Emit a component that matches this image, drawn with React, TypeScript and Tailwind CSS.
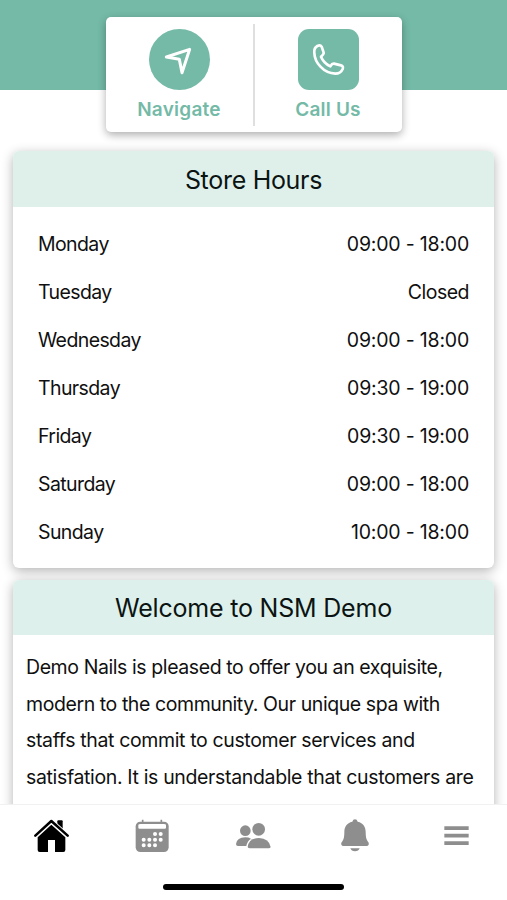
import type { ReactNode } from 'react';

interface DayHours {
  day: string;
  hours: string;
}

const storeHours: DayHours[] = [
  { day: 'Monday', hours: '09:00 - 18:00' },
  { day: 'Tuesday', hours: 'Closed' },
  { day: 'Wednesday', hours: '09:00 - 18:00' },
  { day: 'Thursday', hours: '09:30 - 19:00' },
  { day: 'Friday', hours: '09:30 - 19:00' },
  { day: 'Saturday', hours: '09:00 - 18:00' },
  { day: 'Sunday', hours: '10:00 - 18:00' },
];

const welcomeLines = [
  { text: 'Demo Nails is pleased to offer you an exquisite,', className: 'tracking-[-0.41px]' },
  { text: 'modern to the community. Our unique spa with', className: 'tracking-[-0.42px]' },
  { text: 'staffs that commit to customer services and', className: 'tracking-[-0.36px]' },
  { text: 'satisfation. It is understandable that customers are', className: 'tracking-[-0.35px]' },
];

function NavigateIcon() {
  return (
    <svg className="w-[61px] h-[61px]" viewBox="177 88 183 183" fill="none" stroke="#fff" strokeWidth="9" strokeLinejoin="round">
      <path d="M299 149 L229 172 L268 179 L276 219 Z" />
    </svg>
  );
}

function PhoneIcon() {
  return (
    <svg className="w-[61px] h-[61px]" viewBox="624 88 183 183" fill="none" stroke="#fff" strokeWidth="8" strokeLinejoin="round">
      <path d="M682 139 Q691 135 695 141 L701 159 Q702 163 693 171 C699 186 707 193 721 200 Q726 191 732 192 L753 197 Q761 199 758 208 Q752 222 736 222 C700 221 674 188 673 160 Q671 145 682 139 Z" />
    </svg>
  );
}

function HomeIcon() {
  return (
    <svg className="w-[35px] h-[35px]" viewBox="42 56 105 105">
      <path d="M112 63 Q112 60 115 60 H125 Q128 60 128 63 V94 L112 79 Z" />
      <path d="M46 106 L94 62 L143 106" fill="none" stroke="#fff" strokeWidth="13" />
      <path d="M46 106 L94 62 L143 106" fill="none" stroke="#000" strokeWidth="7.5" strokeLinecap="round" strokeLinejoin="round" />
      <path d="M94 73 L136 111 V149 Q136 155 130 155 H105 V119 H84 V155 H59 Q53 155 53 149 V111 Z" />
    </svg>
  );
}

function CalendarIcon() {
  return (
    <svg className="w-[35px] h-[35px]" viewBox="346 56 105 105">
      <rect x="348" y="64" width="99" height="91" rx="14" fill="#8e8e8e" />
      <path d="M369 58 v9 M425 58 v9" stroke="#8e8e8e" strokeWidth="5" />
      <path d="M356 74 Q356 71 363 71 H432 Q439 71 439 74 V82 Q439 85 435 85 H360 Q356 85 356 82 Z" fill="#fff" />
      <path
        d="M406 101h.1 M423 101h.1 M372 118h.1 M389 118h.1 M406 118h.1 M423 118h.1 M372 135h.1 M389 135h.1 M406 135h.1"
        stroke="#fff"
        strokeWidth="12"
        strokeLinecap="round"
      />
    </svg>
  );
}

function PeopleIcon() {
  return (
    <svg className="w-[35px] h-[35px]" viewBox="50 56 105 105" fill="#8e8e8e">
      <circle cx="78" cy="91" r="16" />
      <circle cx="118" cy="87" r="19" />
      <path d="M50 131 Q53 111 78 111 Q88 111 95 115 Q84 122 81 137 H56 Q50 137 50 131 Z" />
      <path d="M85 140 Q88 114 119 113 Q149 114 154 140 Q153 144 148 144 H92 Q86 144 85 140 Z" />
    </svg>
  );
}

function BellIcon() {
  return (
    <svg className="w-[35px] h-[35px]" viewBox="354 56 105 105" fill="#8e8e8e">
      <path d="M405 57 Q411 57 413 64 C430 68 437 80 437 95 C437 113 440 120 446 127 Q448 136 440 137 H370 Q362 136 364 127 C370 120 373 113 373 95 C373 80 380 68 397 64 Q399 57 405 57 Z" />
      <path d="M391 144 H419 Q416 153 405 153 Q394 153 391 144 Z" />
    </svg>
  );
}

function MenuIcon() {
  return (
    <svg className="w-[35px] h-[35px]" viewBox="177 56 105 105" fill="#8e8e8e">
      <path d="M193 78h73v11h-73z M193 100.5h73v11h-73z M193 123h73v11h-73z" />
    </svg>
  );
}

function Panel({ title, className, children }: { title: ReactNode; className: string; children: ReactNode }) {
  return (
    <section className={`mx-[13px] shrink-0 rounded-[6px] bg-white shadow-[0_3px_12px_rgba(0,0,0,0.3)] ${className}`}>
      {title}
      {children}
    </section>
  );
}

export default function App() {
  return (
    <div className="flex h-[900px] w-[507px] flex-col overflow-hidden bg-white font-['Inter',sans-serif] text-[#101010]">
      <main className="flex h-[804px] shrink-0 flex-col overflow-hidden">
        {/* Quick actions */}
        <div className="flex h-[151px] shrink-0 justify-center bg-linear-to-b from-[#74baa7] from-[90px] to-white to-[90px] pt-[17px]">
          <div className="flex h-[115px] w-[296px] items-center rounded-[5px] bg-white font-semibold text-[#74baa7] shadow-[0_3px_8px_rgba(0,0,0,0.32)]">
            <div className="flex h-full w-[147px] flex-col items-center pt-3">
              <div className="h-[61px] w-[61px] rounded-full bg-[#74baa7]">
                <NavigateIcon />
              </div>
              <span className="mt-[6px] text-[19px] leading-7 tracking-[0.25px]">Navigate</span>
            </div>
            <div className="h-[102px] w-[2px] bg-[#dfdfdf]" />
            <div className="flex h-full w-[147px] flex-col items-center pt-3">
              <div className="h-[61px] w-[61px] rounded-[11px] bg-[#74baa7]">
                <PhoneIcon />
              </div>
              <span className="mt-[6px] text-[19px] leading-7 tracking-[0.2px]">Call Us</span>
            </div>
          </div>
        </div>

        {/* Opening times */}
        <Panel
          className="h-[417px]"
          title={
            <h2 className="h-14 rounded-t-[6px] bg-[#dff0eb] text-center text-[25px] leading-[58px] tracking-[-0.3px] text-[#0b1412]">
              Store Hours
            </h2>
          }
        >
          <ul className="px-[25px] pt-[14px]">
            {storeHours.map((item) => (
              <li key={item.day} className="flex h-12 items-center justify-between text-[19.5px]">
                <span className="tracking-[-0.6px]">{item.day}</span>
                <span className={item.hours === 'Closed' ? 'tracking-[-0.5px]' : 'tracking-[-0.2px]'}>{item.hours}</span>
              </li>
            ))}
          </ul>
        </Panel>

        <Panel
          className="mt-3 h-[300px]"
          title={
            <h2 className="h-[55px] rounded-t-[6px] bg-[#ddf0eb] text-center text-[25px] leading-[57px] tracking-[-0.2px] text-[#0b1412]">
              Welcome to NSM Demo
            </h2>
          }
        >
          <div className="pt-[14px] pl-[13px] text-[19.5px] leading-[36.6px] whitespace-nowrap">
            {welcomeLines.map((line) => (
              <p key={line.text} className={line.className}>
                {line.text}
              </p>
            ))}
          </div>
        </Panel>
      </main>

      {/* Tab bar */}
      <nav className="flex h-24 shrink-0 flex-col items-center border-t border-[#f1f1f1] bg-white">
        <div className="flex w-full justify-around pt-[13.5px] pl-[1px]">
          <HomeIcon />
          <CalendarIcon />
          <PeopleIcon />
          <BellIcon />
          <MenuIcon />
        </div>
        <div className="mt-[30.5px] h-[6px] w-[181px] rounded-full bg-black" />
      </nav>
    </div>
  );
}
